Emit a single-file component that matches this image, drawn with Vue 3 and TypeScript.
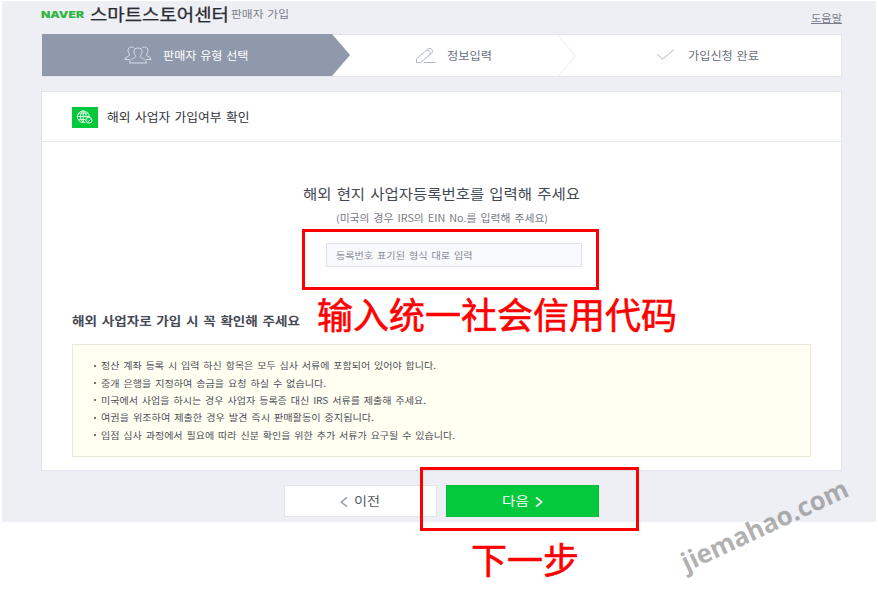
<script setup lang="ts">
import type { Directive } from 'vue'

// Stretches a line of text horizontally so that it fills the given width.
const vFit: Directive<HTMLElement, number> = {
  mounted(el, { value }) {
    const natural = el.getBoundingClientRect().width
    el.style.transform = `scaleX(${value / natural})`
    el.style.marginRight = `${value - natural}px`
  },
}

interface Notice {
  text: string
  width: number
}

const notices: Notice[] = [
  { text: '정산 계좌 등록 시 입력 하신 항목은 모두 심사 서류에 포함되어 있어야 합니다.', width: 335 },
  { text: '중개 은행을 지정하여 송금을 요청 하실 수 없습니다.', width: 225 },
  { text: '미국에서 사업을 하시는 경우 사업자 등록증 대신 IRS 서류를 제출해 주세요.', width: 325 },
  { text: '여권을 위조하여 제출한 경우 발견 즉시 판매활동이 중지됩니다.', width: 273 },
  { text: '입점 심사 과정에서 필요에 따라 신분 확인을 위한 추가 서류가 요구될 수 있습니다.', width: 354 },
]
</script>

<template>
  <div class="screen">
    <div class="page">
      <header class="top">
        <span v-fit="43" class="fit naver">NAVER</span>
        <h1 v-fit="139" class="fit brand">스마트스토어센터</h1>
        <span v-fit="58" class="fit sub">판매자 가입</span>
        <a class="help"><span v-fit="31" class="fit">도움말</span></a>
      </header>

      <ol class="steps">
        <li class="step active">
          <svg class="i-users" width="28" height="20" viewBox="0 0 28 20">
            <path d="M10.200 3.300C9.200 1.400 4 1.300 4 5.300c0 2.500 1.500 3 1.500 4.700 0 1.700-4.500 1.500-4.500 4.500h4.500M17.800 3.300c1-1.900 6.200-2 6.200 2 0 2.500-1.500 3-1.500 4.700 0 1.700 4.500 1.500 4.500 4.500h-4.500" />
            <path d="M14 3c-3 0-4.300 1.500-4 4.300.2 2 1.700 2.700 1.700 4.200 0 2.300-6.200 1.300-6.200 6.500h17c0-5.200-6.200-4.200-6.200-6.500 0-1.500 1.500-2.200 1.700-4.200.3-2.800-1-4.300-4-4.300z" />
          </svg>
          <span v-fit="85.5" class="fit">판매자 유형 선택</span>
        </li>
        <li class="step second">
          <svg class="i-pencil" width="21" height="17" viewBox="0 0 21 17">
            <path d="M1.500 15.500v-3.700L12.700 2.200c1.400-1.200 3.200-1 4.200.2 1 1.200.9 2.700-.4 3.900L5.700 15.500zM11.300 3.500c2.200-.4 4.200 1.500 3.900 3.900M9 15.500h11.500" />
          </svg>
          <span v-fit="45" class="fit">정보입력</span>
        </li>
        <li class="divider">
          <svg width="20" height="42" viewBox="0 0 20 42"><path d="M1 0l17 21L1 42" /></svg>
        </li>
        <li class="step third">
          <svg class="i-check" width="20" height="14" viewBox="0 0 20 14"><path d="M1.300 6.300l5.200 4.800L18 1.700" /></svg>
          <span v-fit="71" class="fit">가입신청 완료</span>
        </li>
      </ol>

      <main class="card">
        <div class="card-head">
          <span class="globe">
            <svg width="18" height="16" viewBox="0 0 18 16">
              <path d="M9.500 13.200A6 5.800 0 1 1 13.300 8M7.200 1.600v11.600M1.300 7.400H13M2.300 4.200h10M2.300 10.600h7M7.200 1.600c-3.700 3-3.700 8.600 0 11.600M7.200 1.600c2.400 1.800 3.300 4.400 2.900 7" />
              <ellipse cx="12.900" cy="11.200" rx="3.100" ry="2.900" />
              <path d="M11.500 11.200l1.200 1.100 1.900-2" />
            </svg>
          </span>
          <h2 v-fit="142.500" class="fit">해외 사업자 가입여부 확인</h2>
        </div>

        <section class="form">
          <h3 v-fit="277" class="fit ask">해외 현지 사업자등록번호를 입력해 주세요</h3>
          <p v-fit="212" class="fit hint">(미국의 경우 IRS의 EIN No.를 입력해 주세요)</p>
          <div class="field"><span v-fit="136.500" class="fit">등록번호 표기된 형식 대로 입력</span></div>
        </section>

        <section class="notice">
          <h3 v-fit="228" class="fit">해외 사업자로 가입 시 꼭 확인해 주세요</h3>
          <ul>
            <li v-for="n in notices" :key="n.text">
              <i class="dot"></i><span v-fit="n.width" class="fit">{{ n.text }}</span>
            </li>
          </ul>
        </section>
      </main>

      <footer class="actions">
        <button class="btn prev">
          <svg width="8" height="12" viewBox="0 0 8 12"><path d="M7 1.300L1.300 6 7 10.700" /></svg>
          <span v-fit="26" class="fit">이전</span>
        </button>
        <button class="btn next">
          <span v-fit="27" class="fit">다음</span>
          <svg width="8" height="12" viewBox="0 0 8 12"><path d="M1 1.300L6.700 6 1 10.700" /></svg>
        </button>
      </footer>
    </div>

    <div class="mark mark-input"></div>
    <div class="mark mark-next"></div>
    <p class="note note-input">输入统一社会信用代码</p>
    <p class="note note-next">下一步</p>
    <span class="watermark"><span v-fit="179" class="fit">jiemahao.com</span></span>
  </div>
</template>

<style>
body {
  background: #fff;
}
</style>

<style scoped>
.screen {
  position: relative;
  width: 878px;
  height: 606px;
  overflow: hidden;
  box-sizing: border-box;
  padding: 1px 2px 0;
  font-family: 'Noto Sans CJK KR', sans-serif;
  color: #454954;
}
.screen * {
  box-sizing: border-box;
}
h1, h2, h3, p, ul, ol {
  margin: 0;
  padding: 0;
  list-style: none;
  font-weight: 400;
}
svg {
  flex: none;
  fill: none;
  stroke: currentColor;
}
.fit {
  display: inline-block;
  flex: none;
  white-space: nowrap;
  transform-origin: 0 50%;
}
.page {
  height: 521px;
  padding: 0 34px 0 39px;
  background: #eeeff5;
}
.top {
  display: flex;
  height: 33px;
  line-height: 26px;
}
.naver {
  font: 900 9.500px/28px Inter, sans-serif;
  color: #32b544;
}
.brand {
  margin-left: 6px;
  font-size: 17px;
  line-height: 25px;
  color: #292b30;
  -webkit-text-stroke: 0.25px #292b30;
}
.sub {
  margin-left: 2px;
  font-size: 10.500px;
  word-spacing: 1px;
  color: #7d808a;
}
.help {
  margin-left: auto;
  height: 24px;
  padding-top: 4px;
  font-size: 10px;
  color: #7b7f8c;
}
.help .fit {
  text-decoration: underline;
}
.steps {
  display: flex;
  height: 43px;
  border: 1px solid #e3e5eb;
  border-left: 0;
  margin-left: 1px;
  background: #fff;
}
.step {
  display: flex;
  align-items: center;
  height: 40px;
  font-size: 11.500px;
  word-spacing: 1px;
  color: #6b707c;
}
.step.active {
  width: 308px;
  margin-top: -1px;
  height: 42px;
  padding-left: 82px;
  color: #fff;
  background: #9098ab;
  clip-path: polygon(0 0, 290px 0, 100% 50%, 290px 100%, 0 100%);
}
.i-users {
  margin-right: 11px;
  color: #dadde5;
}
.step.second {
  width: 207px;
  padding-left: 65px;
}
.i-pencil {
  margin-right: 11px;
  color: #b0b6ca;
}
.divider {
  width: 20px;
  height: 41px;
  overflow: hidden;
  color: #e9ebf0;
}
.step.third {
  padding-left: 79px;
}
.i-check {
  margin-right: 12px;
  color: #b2b7ca;
}
.card {
  height: 380px;
  margin-top: 14px;
  background: #fff;
  border: 1px solid #e1e3ea;
}
.card-head {
  display: flex;
  align-items: center;
  height: 50px;
  padding-left: 30px;
  border-bottom: 1px solid #e8eaef;
}
.globe {
  display: flex;
  align-items: center;
  justify-content: center;
  width: 26px;
  height: 21px;
  margin: 1px 9px 0 0;
  color: #dcf8e4;
  background: #05c93c;
}
.card-head h2 {
  font-size: 12px;
  word-spacing: 1.500px;
  color: #30333a;
}
.form {
  display: flex;
  flex-direction: column;
  align-items: flex-start;
  height: 163px;
  padding: 39px 0 0 261px;
}
.ask {
  font-size: 14px;
  line-height: 24px;
  word-spacing: 1.500px;
}
.hint {
  margin: 3px 0 0 33px;
  font-size: 10px;
  line-height: 20px;
  word-spacing: 1.500px;
  color: #777b86;
}
.field {
  width: 256px;
  height: 24px;
  margin: 15px 0 0 23px;
  padding-left: 9px;
  border: 1px solid #e0e2e8;
  background: #f8f9fd;
  font-size: 9px;
  line-height: 23px;
  word-spacing: 1.500px;
  color: #858995;
}
.notice {
  padding: 2px 30px 0;
}
.notice h3 {
  font-size: 12.500px;
  font-weight: 700;
  line-height: 27px;
  word-spacing: 1.500px;
}
.notice ul {
  height: 113px;
  margin-top: 10px;
  padding: 12px 0 0 22px;
  border: 1px solid #e9e9d8;
  background: #fffff2;
}
.notice li {
  display: flex;
  align-items: center;
  height: 17.400px;
  font-size: 9px;
  word-spacing: 1.500px;
  color: #4b4e56;
}
.dot {
  width: 2px;
  height: 2px;
  margin: 0 5px 0 -1px;
  background: #73767d;
}
.actions {
  display: flex;
  gap: 9px;
  padding: 14px 0 0 243px;
}
.btn {
  display: flex;
  align-items: center;
  width: 153px;
  height: 32px;
  border: 1px solid #e1e3e9;
  padding: 0 0 2px;
  background: #fff;
  font: 400 12.500px 'Noto Sans CJK KR', sans-serif;
  color: #555961;
}
.btn svg {
  stroke-width: 1.600;
  margin-top: 3px;
}
.prev {
  gap: 6px;
  padding-left: 55px;
}
.prev svg {
  color: #9ba1ae;
}
.next {
  gap: 6px;
  padding-left: 55px;
  border-color: #06bd3a;
  background: #05c93c;
  color: #fff;
}
.mark {
  position: absolute;
  border: 3px solid #f00;
}
.mark-input {
  left: 302px;
  top: 229px;
  width: 297px;
  height: 61px;
}
.mark-next {
  left: 420px;
  top: 467px;
  width: 219px;
  height: 64px;
}
.note {
  position: absolute;
  font: 400 36px/44px 'Noto Sans CJK SC', sans-serif;
  -webkit-text-stroke: 0.600px #f00;
  color: #f00;
  white-space: nowrap;
}
.note-input {
  left: 317px;
  top: 291px;
}
.note-next {
  left: 471px;
  top: 536px;
}
.watermark {
  position: absolute;
  left: 674px;
  top: 507px;
  width: 179px;
  font: 700 26px/36px 'Open Sans', sans-serif;
  color: rgba(100, 100, 100, 0.5);
  transform: rotate(-25deg);
}
</style>
